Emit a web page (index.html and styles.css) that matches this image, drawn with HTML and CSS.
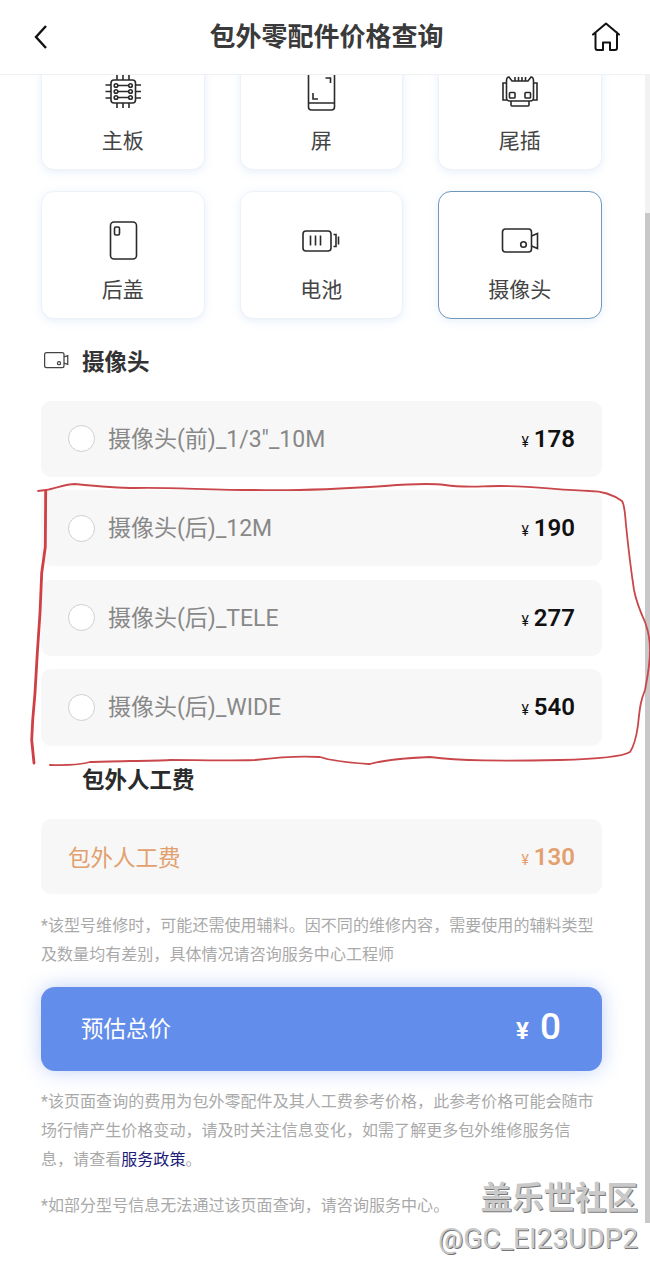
FILE: index.html
```html
<!DOCTYPE html>
<html lang="zh-CN">
<head>
<meta charset="utf-8">
<title>包外零配件价格查询</title>
<link rel="stylesheet" href="styles.css">
</head>
<body>
<div class="app">
  <header class="topbar">
    <svg class="back" viewBox="0 0 16 26"><path d="M13 2 3 13l10 11"/></svg>
    <h1 class="title">包外零配件价格查询</h1>
    <svg class="home" viewBox="0 0 28 30"><path d="M1 12.500 14 1.500l13 11M3.500 10.500V26a2 2 0 0 0 2 2H11v-7.500h7V28h5a2 2 0 0 0 2-2V10.500"/></svg>
  </header>

  <main class="content">
    <section class="cards">
      <div class="card">
        <svg class="card-icon" viewBox="0 0 40 40"><rect x="8" y="9" width="24.500" height="23" rx="3"/><path d="M2.500 14h5.500M2.500 20.500h5.500M2.500 27h5.500M32.500 14h5.500M32.500 20.500h5.500M32.500 27h5.500M14 4v5M20 4v5M26 4v5M14 32v5M20 32v5M26 32v5M14.500 14.500h11.500M14.500 20.500h11.500M14.500 26.500h11.500"/><circle cx="13" cy="14.500" r="1.800"/><circle cx="27.500" cy="14.500" r="1.800"/><circle cx="13" cy="20.500" r="1.800"/><circle cx="27.500" cy="20.500" r="1.800"/><circle cx="13" cy="26.500" r="1.800"/><circle cx="27.500" cy="26.500" r="1.800"/></svg>
        <span class="card-label">主板</span>
      </div>
      <div class="card">
        <svg class="card-icon" viewBox="0 0 40 40"><rect x="7.500" y="-2" width="26" height="41" rx="3"/><path d="M7.500 32h26M24.500 7h5v5M12 22v6h5"/></svg>
        <span class="card-label">屏</span>
      </div>
      <div class="card">
        <svg class="card-icon" viewBox="0 0 40 40"><path d="M6.500 10Q6.500 6 9 6L12 10H28L31 6Q33.500 6 33.500 10V27Q33.500 30 30 30H10Q6.500 30 6.500 27ZM6.500 12H3V29H6.500M33.500 12H37V29H33.500M15 6v4M18.500 6v4M22 6v4M25.500 6v4M11 30v4q0 1 1 1h16q1 0 1-1v-4"/><rect x="9.500" y="21.500" width="5.500" height="5.500" rx=".8"/><rect x="25" y="21.500" width="5.500" height="5.500" rx=".8"/></svg>
        <span class="card-label">尾插</span>
      </div>
      <div class="card">
        <svg class="card-icon" viewBox="0 0 40 40"><rect x="7.500" y="2" width="26" height="37" rx="3.500"/><rect x="11.500" y="7" width="5" height="8" rx="1.500"/></svg>
        <span class="card-label">后盖</span>
      </div>
      <div class="card">
        <svg class="card-icon" viewBox="0 0 40 40"><rect x="2" y="11" width="28" height="20" rx="3"/><path d="M9.500 15.500v10M14.500 15.500v10M19.500 15.500v10M32.500 14.500h2.500v12h-2.500M37.500 16.500v8"/></svg>
        <span class="card-label">电池</span>
      </div>
      <div class="card card-active">
        <svg class="card-icon" viewBox="0 0 40 40"><rect x="2.500" y="9" width="29" height="23" rx="3"/><circle cx="23.500" cy="24.500" r="2.800"/><path d="M31.500 16l6-2.500v15l-6-2.500"/></svg>
        <span class="card-label">摄像头</span>
      </div>
    </section>

    <h2 class="section-head section-head-camera">
      <svg class="head-icon" viewBox="0 0 40 28"><rect x="1" y="2" width="31" height="24" rx="3"/><circle cx="24" cy="19" r="2.500"/><path d="M32 9l6-2v14l-6-2"/></svg>
      <span>摄像头</span>
    </h2>

    <section class="rows">
      <div class="row"><span class="radio"></span><span class="row-label">摄像头(前)_1/3"_10M</span><span class="price"><i class="yen">¥</i>178</span></div>
      <div class="row"><span class="radio"></span><span class="row-label">摄像头(后)_12M</span><span class="price"><i class="yen">¥</i>190</span></div>
      <div class="row"><span class="radio"></span><span class="row-label">摄像头(后)_TELE</span><span class="price"><i class="yen">¥</i>277</span></div>
      <div class="row"><span class="radio"></span><span class="row-label">摄像头(后)_WIDE</span><span class="price"><i class="yen">¥</i>540</span></div>
    </section>

    <h2 class="section-head section-head-labor"><span>包外人工费</span></h2>

    <div class="row row-labor"><span class="row-label">包外人工费</span><span class="price"><i class="yen">¥</i>130</span></div>

    <p class="note note-first">*该型号维修时，可能还需使用辅料。因不同的维修内容，需要使用的辅料类型及数量均有差别，具体情况请咨询服务中心工程师</p>

    <div class="total">
      <span class="total-label">预估总价</span>
      <span class="total-value"><i class="total-yen">¥</i>0</span>
    </div>

    <p class="note note-second">*该页面查询的费用为包外零配件及其人工费参考价格，此参考价格可能会随市场行情产生价格变动，请及时关注信息变化，如需了解更多包外维修服务信息，请查看<a class="link">服务政策</a>。</p>
    <p class="note note-third">*如部分型号信息无法通过该页面查询，请咨询服务中心。</p>
  </main>

  <div class="scroll-track"></div>
  <div class="scroll-thumb"></div>

  <svg class="annotation" viewBox="0 0 650 1273">
    <path class="annotation-thin" d="M38 491 46 490C55 489 65 484 75 484 95 486 115 488 135 488 165 487 210 490 255 490 300 491 340 489 385 486 410 484 430 483 445 485 465 488 480 486 500 486 530 486 560 490 590 491 600 491 612 494 622 501 625 506 625 515 626 525 628 545 631 570 634 590 636 600 640 611 645 622 648 630 650 640 650 650 650 665 647 680 645 690 641 700 640 705 638 725 636 740 634 746 630 752 622 757 600 759 560 760 500 761 460 761 430 757 405 758 385 760 370 764 355 763 335 762 320 757 305 756 280 757 255 760 220 761 195 760 170 760 150 761 110 761 90 762 78 766 60 765 50 765 36 764"/>
    <path class="annotation-thick" d="M45.700 491 45.300 547 41.700 573 40 613 37.300 653 35 693 32.700 720 31.700 740 34 763"/>
  </svg>

  <div class="watermark">
    <span class="wm-brand">盖乐世社区</span>
    <span class="wm-user">@GC_EI23UDP2</span>
  </div>
</div>
</body>
</html>
```

FILE: styles.css
```css
* { box-sizing: border-box; }
html, body { margin: 0; padding: 0; background: #fff; }
body {
  font-family: Roboto, "Noto Sans CJK SC", "Noto Sans", sans-serif;
  color: #333;
}
.app {
  position: relative;
  width: 650px;
  height: 1273px;
  overflow: hidden;
  background: #fff;
}

/* header floats above the scrolled content */
.topbar {
  position: absolute;
  top: 0;
  left: 0;
  right: 0;
  z-index: 2;
  height: 75px;
  display: grid;
  grid-template-columns: 1fr auto 1fr;
  align-items: center;
  padding: 0 30px 0 33px;
  background: #fff;
  border-bottom: 1px solid #f0f0f0;
}
.back { width: 16px; height: 26px; }
.back path { fill: none; stroke: #111; stroke-width: 2.4; }
.home { width: 28px; height: 30px; justify-self: end; }
.home path { fill: none; stroke: #111; stroke-width: 2; stroke-linejoin: round; stroke-linecap: round; }
.title {
  margin: 0;
  font-size: 26px;
  line-height: 36px;
  font-weight: 700;
  color: #3a3a3a;
}

.content {
  padding: 42px 48px 0 41px;
  display: flex;
  flex-direction: column;
}

.cards {
  display: grid;
  grid-template-columns: repeat(3, 163.5px);
  column-gap: 35px;
  row-gap: 21.500px;
}
.card {
  height: 127.500px;
  padding-top: 28px;
  display: flex;
  flex-direction: column;
  align-items: center;
  gap: 15px;
  background: #fff;
  border: 1px solid #eef2f8;
  border-radius: 13px;
  box-shadow: 0 2px 10px rgba(120, 165, 225, .18);
}
.card-active { border-color: #7098bd; }
.card-icon {
  width: 40px;
  height: 40px;
  flex: none;
  overflow: visible;
}
.card-icon rect, .card-icon path, .card-icon circle,
.head-icon rect, .head-icon path, .head-icon circle {
  fill: none;
  stroke: #2a2a2a;
  stroke-width: 1.600;
}
.card-label {
  font-size: 21px;
  line-height: 30px;
  color: #444;
}

.section-head {
  margin: 0;
  display: flex;
  align-items: center;
  gap: 13px;
  height: 30px;
  font-size: 22.500px;
  font-weight: 700;
  color: #333;
}
.section-head-camera { margin: 26px 0 26px 3px; }
.section-head-labor { margin: 17px 0 26.300px 41px; color: #2a2a2a; }
.head-icon { width: 25px; height: 18px; }
.head-icon rect, .head-icon path, .head-icon circle { stroke: #444; stroke-width: 2; }

.rows {
  display: flex;
  flex-direction: column;
  gap: 13.200px;
}
.row {
  height: 76.400px;
  display: flex;
  align-items: center;
  padding: 0 27px;
  background: #f7f7f7;
  border-radius: 10px;
}
.radio {
  flex: none;
  width: 27px;
  height: 27px;
  margin-right: 13px;
  background: #fff;
  border: 1px solid #cfcfcf;
  border-radius: 50%;
}
.row-label {
  flex: 1;
  padding-top: 2px;
  font-size: 23px;
  line-height: 30px;
  color: #888;
  font-weight: 400;
}
.price {
  display: flex;
  align-items: baseline;
  padding-top: 3px;
  font-size: 24px;
  font-weight: 600;
  line-height: 30px;
  color: #111;
}
.yen {
  margin-right: 5px;
  font-size: 14px;
  font-style: normal;
  font-weight: 400;
}
.row-labor { height: 75.500px; }
.row-labor .row-label { font-size: 22.500px; color: #e3a06f; }
.row-labor .price { color: #e3a06f; }

.note {
  margin: 0;
  max-width: 556px;
  font-size: 16px;
  letter-spacing: .05px;
  line-height: 29px;
  color: #a9a9a9;
}
.note-first { margin-top: 16.500px; }
.note-second { margin-top: 16.500px; }
.note-third { margin-top: 17px; }
.link { color: #1c1c78; }

.total {
  margin-top: 18px;
  height: 84px;
  display: flex;
  align-items: center;
  justify-content: space-between;
  padding: 0 41px 0 40px;
  background: #628deb;
  border-radius: 14px;
  box-shadow: 0 0 20px rgba(98, 141, 235, .4);
  color: #fff;
}
.total-label { font-size: 22.500px; line-height: 30px; }
.total-value {
  display: flex;
  align-items: baseline;
  font-size: 37px;
  font-weight: 500;
  line-height: 44px;
}
.total-yen {
  margin-right: 11px;
  font-size: 24px;
  font-style: normal;
  font-weight: 700;
}

.scroll-track {
  position: absolute;
  top: 75px;
  right: 0;
  width: 5px;
  height: 138px;
  background: #f2f2f2;
}
.scroll-thumb {
  position: absolute;
  top: 213px;
  right: 0;
  width: 5px;
  height: 1010px;
  background: #c8c8c8;
}

.annotation {
  position: absolute;
  inset: 0;
  width: 650px;
  height: 1273px;
  z-index: 3;
  pointer-events: none;
}
.annotation path { fill: none; stroke-linecap: round; stroke-linejoin: round; }
.annotation-thin { stroke: #c9474b; stroke-width: 1.800; }
.annotation-thick { stroke: #cf3f43; stroke-width: 2.800; }

.watermark {
  position: absolute;
  right: 12px;
  top: 1178px;
  z-index: 4;
  display: flex;
  flex-direction: column;
  align-items: flex-end;
  color: #c9c9c9;
  text-shadow: 1px 1px 0 #777, -1px -1px 0 #fff;
}
.wm-brand { font-size: 31.500px; line-height: 42px; font-weight: 700; }
.wm-user { font-size: 28px; line-height: 34px; margin-top: 2px; }
```
